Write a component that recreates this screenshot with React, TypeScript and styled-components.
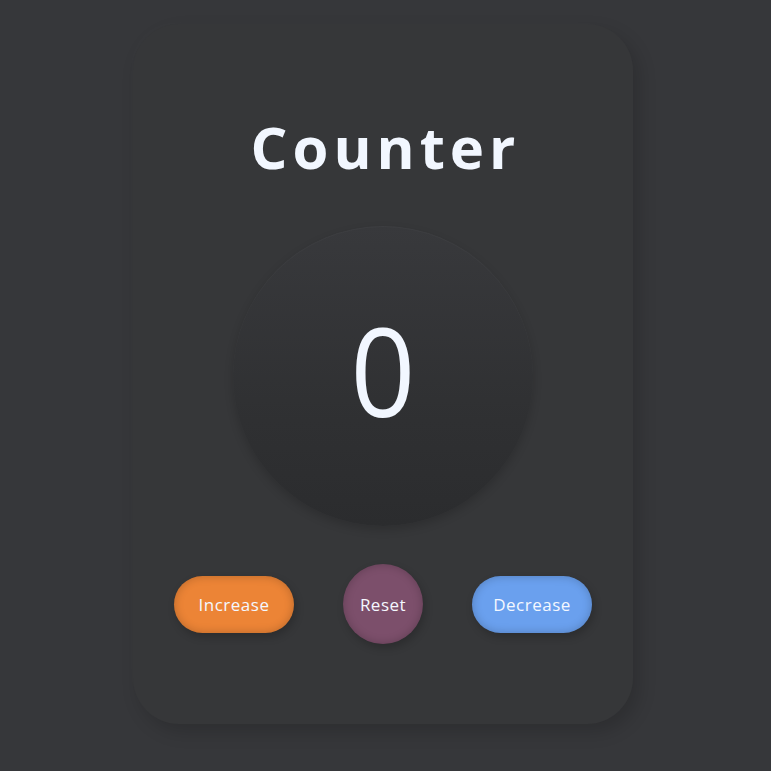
import React, { useState } from "react";
import styled, { createGlobalStyle } from "styled-components";

const GlobalStyle = createGlobalStyle`
  html, body {
    margin: 0;
    padding: 0;
    background-color: #36373a;
  }
  body {
    font-family: "Open Sans", "Liberation Sans", sans-serif;
  }
`;

const Page = styled.div`
  display: flex;
  justify-content: center;
  align-items: flex-start;
  width: 100vw;
  min-height: 100vh;
  padding: 24px 5px 0 0;
  box-sizing: border-box;
  background-color: #36373a;
`;

const Card = styled.div`
  display: flex;
  flex-direction: column;
  align-items: center;
  width: 500px;
  height: 700px;
  box-sizing: border-box;
  padding-top: 90px;
  border-radius: 46px;
  background-color: #363739;
  box-shadow: 6px 8px 18px rgba(0, 0, 0, 0.16),
    -4px -4px 12px rgba(255, 255, 255, 0.012);
`;

const Title = styled.h1`
  margin: 0 0 0 5px;
  font-family: "Open Sans", "Liberation Sans", sans-serif;
  font-weight: 700;
  font-size: 58px;
  line-height: 66px;
  letter-spacing: 5px;
  color: #f2f7ff;
`;

const Display = styled.div`
  display: flex;
  align-items: center;
  justify-content: center;
  width: 300px;
  height: 300px;
  box-sizing: border-box;
  padding-bottom: 12px;
  margin-top: 46px;
  border-radius: 50%;
  background: linear-gradient(180deg, #38393c 0%, #2f3032 65%, #2b2c2e 100%);
  box-shadow: 0 4px 10px rgba(0, 0, 0, 0.16),
    inset 0 1px 1px rgba(255, 255, 255, 0.03);
`;

const Count = styled.span`
  font-family: "Open Sans", "Liberation Sans", sans-serif;
  font-weight: 400;
  font-size: 122px;
  line-height: 1;
  color: #f2f7ff;
  transform: scaleX(0.93);
`;

const Controls = styled.div`
  display: flex;
  align-items: center;
  gap: 49px;
  margin-top: 38px;
`;

const Pill = styled.button<{ $tone: string }>`
  display: flex;
  align-items: center;
  justify-content: center;
  width: 120px;
  height: 57px;
  padding: 0;
  border: none;
  border-radius: 29px;
  background-color: ${(p) => p.$tone};
  box-shadow: inset 0 0 10px rgba(0, 0, 0, 0.22),
    2px 4px 8px rgba(0, 0, 0, 0.2);
  font-family: "Open Sans", "Liberation Sans", sans-serif;
  font-size: 17px;
  letter-spacing: 0.5px;
  color: #f4f8ff;
  cursor: pointer;
`;

const RoundButton = styled(Pill)`
  width: 80px;
  height: 80px;
  border-radius: 50%;
`;

const App = () => {
  const [count, setCount] = useState(0);

  return (
    <>
      <GlobalStyle />
      <Page>
        <Card>
          <Title>Counter</Title>
          <Display>
            <Count>{count}</Count>
          </Display>
          <Controls>
            <Pill $tone="#ec8436" onClick={() => setCount(count + 1)}>
              Increase
            </Pill>
            <RoundButton $tone="#7c4f6b" onClick={() => setCount(0)}>
              Reset
            </RoundButton>
            <Pill $tone="#6aa0ee" onClick={() => setCount(count - 1)}>
              Decrease
            </Pill>
          </Controls>
        </Card>
      </Page>
    </>
  );
};

export default App;
